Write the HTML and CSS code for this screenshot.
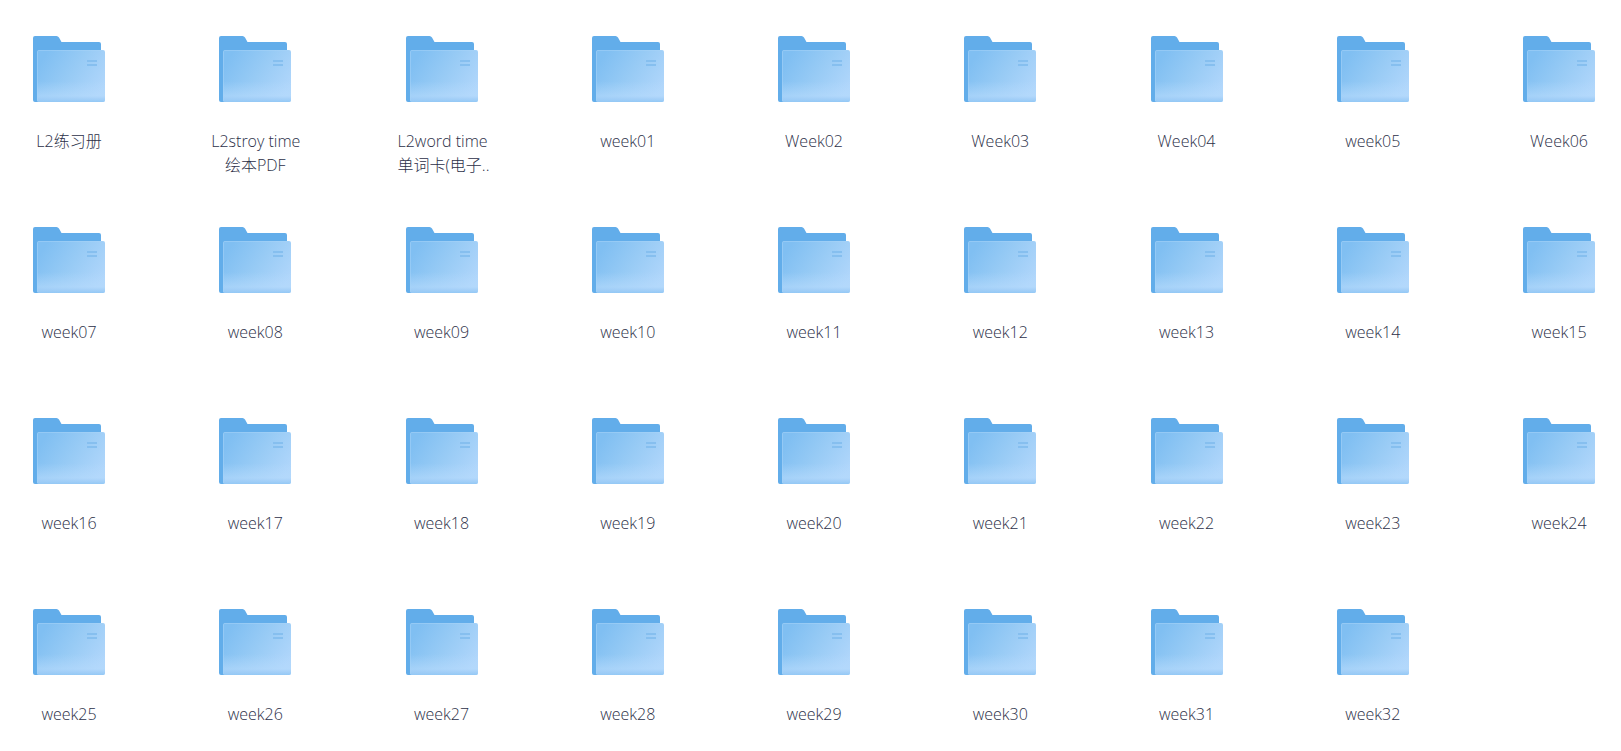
FILE: index.html
```
<!DOCTYPE html>
<html lang="zh-CN">

<head>
	<meta charset="UTF-8">
	<meta name="viewport" content="width=device-width, initial-scale=1.0">
	<title>L2</title>
	<link rel="stylesheet" href="styles.css">
</head>

<body>
	<svg class="sprite" aria-hidden="true">
		<defs>
			<linearGradient id="front" gradientUnits="userSpaceOnUse" x1="14" y1="16" x2="70" y2="52">
				<stop offset="0" stop-color="#80bff2" />
				<stop offset="0.5" stop-color="#98cbf5" />
				<stop offset="1" stop-color="#b0d6fb" />
			</linearGradient>
			<linearGradient id="shine" x1="0" y1="0" x2="0" y2="1">
				<stop offset="0.6" stop-color="#b5dafc" stop-opacity="0" />
				<stop offset="0.88" stop-color="#b5dafc" stop-opacity="0.6" />
				<stop offset="0.93" stop-color="#a5d0f8" stop-opacity="0.8" />
				<stop offset="1" stop-color="#93c8f5" />
			</linearGradient>
			<symbol id="folder" viewBox="0 0 72 66">
				<path fill="#62adea" d="M2 0H23.500Q25 0 26 1.500L28.500 6H66Q68 6 68 8V40L6 66H2Q0 66 0 64V2Q0 0 2 0Z" />
				<rect x="4" y="14" width="68" height="52" rx="2" fill="url(#front)" />
				<rect x="4" y="14" width="68" height="52" rx="2" fill="url(#shine)" />
				<path stroke="#a8d3f8" stroke-opacity="0.5" fill="none" d="M4.500 65V15.500Q4.500 14.500 6 14.500H70" />
				<path fill="#86bfef" d="M54 24H64V26H54ZM54 28H64V30H54Z" />
			</symbol>
		</defs>
	</svg>

	<ul class="file-grid">
		<li class="file"><svg class="icon"><use href="#folder" /></svg><span class="name">L2练习册</span></li>
		<li class="file"><svg class="icon"><use href="#folder" /></svg><span class="name">L2stroy time<br>绘本PDF</span></li>
		<li class="file"><svg class="icon"><use href="#folder" /></svg><span class="name">L2word time<br>单词卡(电子..</span></li>
		<li class="file"><svg class="icon"><use href="#folder" /></svg><span class="name">week01</span></li>
		<li class="file"><svg class="icon"><use href="#folder" /></svg><span class="name">Week02</span></li>
		<li class="file"><svg class="icon"><use href="#folder" /></svg><span class="name">Week03</span></li>
		<li class="file"><svg class="icon"><use href="#folder" /></svg><span class="name">Week04</span></li>
		<li class="file"><svg class="icon"><use href="#folder" /></svg><span class="name">week05</span></li>
		<li class="file"><svg class="icon"><use href="#folder" /></svg><span class="name">Week06</span></li>
		<li class="file"><svg class="icon"><use href="#folder" /></svg><span class="name">week07</span></li>
		<li class="file"><svg class="icon"><use href="#folder" /></svg><span class="name">week08</span></li>
		<li class="file"><svg class="icon"><use href="#folder" /></svg><span class="name">week09</span></li>
		<li class="file"><svg class="icon"><use href="#folder" /></svg><span class="name">week10</span></li>
		<li class="file"><svg class="icon"><use href="#folder" /></svg><span class="name">week11</span></li>
		<li class="file"><svg class="icon"><use href="#folder" /></svg><span class="name">week12</span></li>
		<li class="file"><svg class="icon"><use href="#folder" /></svg><span class="name">week13</span></li>
		<li class="file"><svg class="icon"><use href="#folder" /></svg><span class="name">week14</span></li>
		<li class="file"><svg class="icon"><use href="#folder" /></svg><span class="name">week15</span></li>
		<li class="file"><svg class="icon"><use href="#folder" /></svg><span class="name">week16</span></li>
		<li class="file"><svg class="icon"><use href="#folder" /></svg><span class="name">week17</span></li>
		<li class="file"><svg class="icon"><use href="#folder" /></svg><span class="name">week18</span></li>
		<li class="file"><svg class="icon"><use href="#folder" /></svg><span class="name">week19</span></li>
		<li class="file"><svg class="icon"><use href="#folder" /></svg><span class="name">week20</span></li>
		<li class="file"><svg class="icon"><use href="#folder" /></svg><span class="name">week21</span></li>
		<li class="file"><svg class="icon"><use href="#folder" /></svg><span class="name">week22</span></li>
		<li class="file"><svg class="icon"><use href="#folder" /></svg><span class="name">week23</span></li>
		<li class="file"><svg class="icon"><use href="#folder" /></svg><span class="name">week24</span></li>
		<li class="file"><svg class="icon"><use href="#folder" /></svg><span class="name">week25</span></li>
		<li class="file"><svg class="icon"><use href="#folder" /></svg><span class="name">week26</span></li>
		<li class="file"><svg class="icon"><use href="#folder" /></svg><span class="name">week27</span></li>
		<li class="file"><svg class="icon"><use href="#folder" /></svg><span class="name">week28</span></li>
		<li class="file"><svg class="icon"><use href="#folder" /></svg><span class="name">week29</span></li>
		<li class="file"><svg class="icon"><use href="#folder" /></svg><span class="name">week30</span></li>
		<li class="file"><svg class="icon"><use href="#folder" /></svg><span class="name">week31</span></li>
		<li class="file"><svg class="icon"><use href="#folder" /></svg><span class="name">week32</span></li>
	</ul>
</body>

</html>
```
FILE: styles.css
```
body {
	margin: 0;
	background: #fff;
	color: #2c3048;
	font: 300 16px/24px "Open Sans", "Noto Sans CJK SC", sans-serif;
}

.sprite {
	display: block;
	width: 0;
	height: 0;
}

.file-grid {
	display: grid;
	grid-template-columns: repeat(9, 88px);
	grid-auto-rows: 141px;
	justify-content: space-between;
	row-gap: 50px;
	margin: 0;
	padding: 36px 18px 0 25px;
	list-style: none;
}

.file {
	display: flex;
	flex-direction: column;
	align-items: center;
}

.icon {
	flex: none;
	width: 72px;
	height: 66px;
	margin-bottom: 27px;
}

/* long names run past the right edge */
.name {
	width: 88px;
	text-align: center;
	white-space: nowrap;
}
```
